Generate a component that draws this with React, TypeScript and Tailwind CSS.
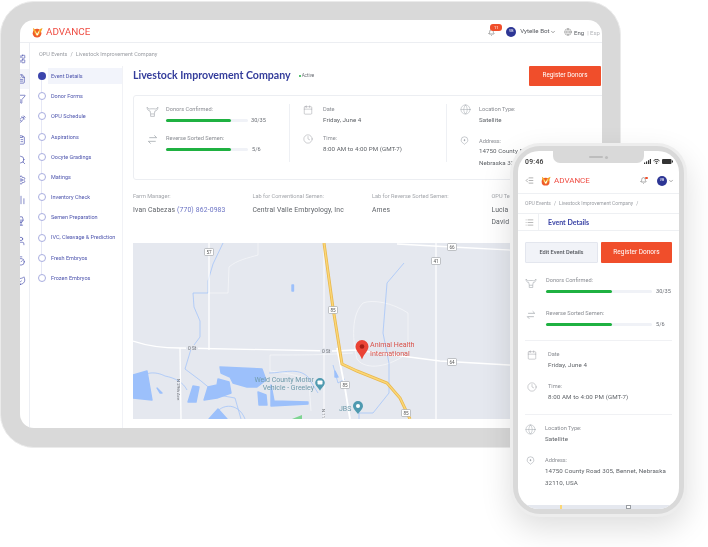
import React from "react";
import { Bell, Calendar, ChevronDown, Clock, Globe, LayoutGrid, FileText, Filter, Syringe, ClipboardList, Search, Settings, BarChart2, Wine, User, Timer, Leaf, List, IndentDecrease } from "lucide-react";

const sans = "font-['Roboto','Liberation_Sans',sans-serif]";
const head = "font-['Lato','Liberation_Sans',sans-serif]";

function Logo({ size }: { size: number }) {
  return (
    <svg width={size} height={size} viewBox="0 0 24 24" className="shrink-0">
      <circle cx="11" cy="13.5" r="9.5" fill="#ef5a2c" />
      <path d="M2 2 C6 4 9 8 11 13 C13 8 17 4 23 2 C21 9 16 17 11 20 C7 16 3 9 2 2Z" fill="#f6a623" />
      <path d="M6 7 L11 15 L17 6 L13 18 L10 18Z" fill="#fff" />
    </svg>
  );
}

function Brand({ size, text }: { size: number; text: string }) {
  return (
    <div className="flex items-center gap-[3px]">
      <Logo size={size} />
      <span className={`${sans} ${text} font-normal text-[#ef4d43] leading-none`}>ADVANCE</span>
    </div>
  );
}

function Cow({ size }: { size: number }) {
  return (
    <svg width={size} height={size} viewBox="0 0 24 24" fill="none" stroke="#a4a9ae" strokeWidth="1.2">
      <path d="M2 4 C4 7 6 8 9 7 H15 C18 8 20 7 22 4 C22 9 19 11 16.5 11 L15.5 16 V21 H8.5 V16 L7.5 11 C5 11 2 9 2 4Z" />
      <path d="M8.5 16.5 H15.5 M10.5 19h.01M13.5 19h.01" />
    </svg>
  );
}

function Swap({ size }: { size: number }) {
  return (
    <svg width={size} height={size} viewBox="0 0 24 24" fill="none" stroke="#9aa0a6" strokeWidth="1.6">
      <path d="M5 8h16M16 3l5 5M19 16H3M8 21l-5-5" />
    </svg>
  );
}

function GlobeBall({ size }: { size: number }) {
  return <Globe size={size} strokeWidth={1} color="#9aa0a6" />;
}

function PinRing({ size }: { size: number }) {
  return (
    <svg width={size} height={size} viewBox="0 0 24 24" fill="none" stroke="#9aa0a6" strokeWidth="1.4">
      <path d="M12 22 C9 19 3 17 3 11 a9 9 0 0 1 18 0 C21 17 15 19 12 22Z" />
      <circle cx="12" cy="11" r="1.6" fill="#9aa0a6" />
    </svg>
  );
}

function Progress({ value, track, fill, gap }: { value: string; track: string; fill: string; gap: string }) {
  return (
    <div className={`flex items-center h-[12px] ${gap}`}>
      <div className={`h-[3px] rounded-full bg-[#f0f2f7] ${track}`}>
        <div className={`h-[3px] rounded-full bg-[#1fb141] ${fill}`} />
      </div>
      <span className={`${sans} text-[5.6px] text-[#6b6f76]`}>{value}</span>
    </div>
  );
}

function Label({ children }: { children: React.ReactNode }) {
  return <div className={`${sans} h-[10px] leading-[10px] text-[5.65px] text-[#8a8d93] whitespace-nowrap`}>{children}</div>;
}

function Value({ children }: { children: React.ReactNode }) {
  return <div className={`${sans} leading-[11.5px] pt-[0.5px] text-[6.2px] tracking-[0.05px] text-[#5f6368] whitespace-nowrap`}>{children}</div>;
}

const steps = ["Event Details", "Donor Forms", "OPU Schedule", "Aspirations", "Oocyte Gradings", "Matings", "Inventory Check", "Semen Preparation", "IVC, Cleavage & Prediction", "Fresh Embryos", "Frozen Embryos"];

const railIcons = [LayoutGrid, FileText, Filter, Syringe, ClipboardList, Search, Settings, BarChart2, Wine, User, Timer, Leaf];

function Rail() {
  return (
    <div className="w-[10px] shrink-0 border-r-[1.5px] border-[#eceef3] overflow-hidden flex flex-col items-end pt-[6px]">
      {railIcons.map((I, i) => (
        <div key={i} className={`h-[20.2px] w-[10px] shrink-0 overflow-hidden flex items-center justify-end ${i === 1 ? "bg-[#f3f4fa]" : ""}`}>
          <I size={10} strokeWidth={1.5} color="#3f47a8" className="shrink-0 mr-[3px]" />
        </div>
      ))}
    </div>
  );
}

function StepNav() {
  return (
    <div className="w-[93px] shrink-0 border-r border-[#f1f2f6] pl-[6px]">
      {steps.map((s, i) => (
        <div key={s} className="relative h-[20.2px] flex items-center">
          {i < steps.length - 1 && <div className="absolute left-[5px] top-[14px] h-[13px] w-px bg-[#e6e8f6]" />}
          <div className={`w-[8px] h-[8px] rounded-full shrink-0 ${i === 0 ? "bg-[#3b44ac]" : "bg-white border-[0.7px] border-[#a9aee0]"} ml-[1.5px]`} />
          <div className={`${sans} ml-[2.5px] flex-1 h-[16px] flex items-center pl-[3px] text-[5.5px] whitespace-nowrap text-[#4d54ad] ${i === 0 ? "bg-[#f2f4fb]" : ""}`}>{s}</div>
        </div>
      ))}
    </div>
  );
}

function MapArt({ w, h }: { w: number; h: number }) {
  const shields: [number, number, string][] = [[76, 9, "57"], [200, 67, "85"], [212, 142, "85"], [273, 170, "85"], [319, 4, "66"], [303, 18, "41"], [319, 119, "64"]];
  return (
    <svg width={w} height={h} viewBox={`0 0 ${w} ${h}`} className="block bg-[#e5e8ef]">
      <g fill="none" stroke="#fff" strokeWidth="0.6" opacity="0.8">
        <path d="M125 0 V12 C115 15 104 17 96 24 L95 50 H75" />
        <path d="M220 110 C190 112 170 112 137 112 V128 C150 130 172 132 176 140 L178 168" />
        <path d="M230 60 C215 75 222 108 224 116 C230 125 250 128 275 110 V70 C260 60 240 56 230 60Z" />
      </g>
      <g fill="none" stroke="#9cc0fb" strokeWidth="0.7">
        <path d="M90 0 L80 21 L75 38 V50 H60 L61 64 L67 78 V94 L58 106 L52 126 L68 138 L85 152 L102 155 L108 176" />
        <path d="M0 141 C10 128 22 128 32 133 C42 135 50 139 54 147" />
        <path d="M80 176 C85 160 105 158 112 176" />
        <path d="M136 130 C150 130 165 124 175 134 L185 150 M200 122 L205 140 L212 136" />
        <path d="M271 20 L254 40 L250 90 L256 120 V150 L240 170 H226 V176" />
      </g>
      <g fill="#9cc0fb" stroke="#9cc0fb" strokeWidth="1.4" strokeLinejoin="round">
        <polygon points="0,132 14,128 19,157 0,155" />
        <polygon points="24,145 29,150 27,150" />
        <polygon points="55,159 60,143 66,144 63,159" />
        <polygon points="71,157 75,144 84,142 85,136 96,139 98,150 84,155" />
        <polygon points="87,124 129,126 133,137 124,144 114,144 100,140 97,134 88,130" />
        <polygon points="125,149 133,152 134,162 126,162" />
        <polygon points="138,142 141,158 175,159 175,161 138,163" />
        <polygon points="76,176 85,166 94,176" />
        <rect x="159" y="42" width="1.5" height="6" />
        <polygon points="202,128 205,134 202,134" />
      </g>
      <polygon points="159,176 169,172 169,176" fill="#7ed492" />
      <g fill="none" stroke="#fff">
        <path d="M0 98 C15 103 35 105 47 105 L200 108 L222 107 L307 118 L376 122 L469 126" strokeWidth="1.3" />
        <path d="M76 0 V107" strokeWidth="1.3" />
        <path d="M47 105 L48 176" strokeWidth="1.3" />
        <path d="M191 0 V176" strokeWidth="0.9" />
        <path d="M303 0 V176" strokeWidth="1.2" />
        <path d="M264 1 L319 4 L469 12" strokeWidth="1.3" />
        <path d="M204 105 L212 145 L217 176" strokeWidth="1.8" />
      </g>
      <path d="M191 0 L200 65 L209 121 L224 128 L254 140 L267 155 L277 176" fill="none" stroke="#e9b84e" strokeWidth="3" />
      <path d="M191 0 L200 65 L209 121 L224 128 L254 140 L267 155 L277 176" fill="none" stroke="#fbd777" strokeWidth="1.4" />
      {shields.map(([x, y, t]) => (
        <g key={x + t}>
          <rect x={x - 4.5} y={y - 3.5} width="9" height="7" rx="1" fill="#fff" stroke="#9a9ea3" strokeWidth="0.6" />
          <text x={x} y={y + 1.8} textAnchor="middle" fontSize="4.6" fill="#555" fontFamily="Roboto">{t}</text>
        </g>
      ))}
      <g fontFamily="Roboto" fontSize="4.6" fill="#6b6f76">
        <rect x="53" y="102" width="12" height="5" fill="#e5e8ef" />
        <text x="59" y="106.5" textAnchor="middle">O St</text>
        <rect x="187" y="105" width="12" height="5" fill="#e5e8ef" />
        <text x="193" y="109.5" textAnchor="middle">O St</text>
        <text transform="translate(44 136) rotate(90)" fontSize="4.4">N 29th Ave</text>
        <text transform="translate(189 166) rotate(90)" fontSize="4.4">N 11</text>
      </g>
      <g fontFamily="Roboto" fontSize="7" fill="#6f9bab">
        <text x="181" y="139" textAnchor="end">Weld County Motor</text>
        <text x="181" y="147" textAnchor="end">Vehicle - Greeley</text>
        <text x="206" y="168">JBS</text>
      </g>
      <path d="M187 135 a4.8 4.8 0 0 1 4.8 4.8 c0 3 -3 4.5 -4.8 8 c-1.8 -3.5 -4.8 -5 -4.8 -8 a4.8 4.8 0 0 1 4.8 -4.8Z" fill="#4f9ab0" />
      <rect x="184.5" y="137.5" width="5" height="4" rx="0.8" fill="#fff" />
      <path d="M225 158 a5 5 0 0 1 5 5 c0 3 -3 5 -5 8 c-2 -3 -5 -5 -5 -8 a5 5 0 0 1 5 -5Z" fill="#4f9ab0" />
      <circle cx="225" cy="163" r="2" fill="#fff" />
      <path d="M229 97 a6.5 6.5 0 0 1 6.5 6.5 c0 4.5 -4.5 7 -6.5 13 c-2 -6 -6.5 -8.5 -6.5 -13 a6.5 6.5 0 0 1 6.5 -6.5Z" fill="#ea4335" />
      <circle cx="229" cy="103.5" r="2.3" fill="#a51d14" />
      <g fontFamily="Roboto" fontSize="7.1" fill="#d9534b">
        <text x="237" y="104">Animal Health</text>
        <text x="237" y="113">International</text>
      </g>
    </svg>
  );
}

function DesktopCard() {
  return (
    <div className="mt-[9px] w-[500px] h-[85px] border border-[#eceef2] rounded-[3px] pt-[8px] flex">
      <div className="w-[156px] h-[58px] border-r border-[#eef0f4] shrink-0 flex flex-col">
        <div className="h-[32px] flex pl-[12px] gap-[6px]">
          <div className="w-[14px] pt-[1px]"><Cow size={13} /></div>
          <div>
            <Label>Donors Confirmed:</Label>
            <Progress value="30/35" track="w-[82px]" fill="w-[65px]" gap="gap-[3px]" />
          </div>
        </div>
        <div className="h-[32px] flex pl-[12px] gap-[6px]">
          <div className="w-[14px] pt-[1px] pl-[1px]"><Swap size={11} /></div>
          <div>
            <Label>Reverse Sorted Semen:</Label>
            <Progress value="5/6" track="w-[82px]" fill="w-[65px]" gap="gap-[4px]" />
          </div>
        </div>
      </div>
      <div className="w-[157px] h-[58px] border-r border-[#eef0f4] shrink-0 pl-[13px] flex flex-col">
        <div className="h-[31.5px] flex gap-[10px]">
          <Calendar size={10} strokeWidth={1} color="#8a8d93" className="mt-[1px]" />
          <div><Label>Date</Label><Value>Friday, June 4</Value></div>
        </div>
        <div className="h-[31.5px] flex gap-[10px]">
          <Clock size={10} strokeWidth={1} color="#8a8d93" className="mt-[1px]" />
          <div><Label>Time:</Label><Value>8:00 AM to 4:00 PM (GMT-7)</Value></div>
        </div>
      </div>
      <div className="pl-[13px] flex flex-col">
        <div className="h-[31.5px] flex gap-[8px]">
          <GlobeBall size={11} />
          <div><Label>Location Type:</Label><Value>Satellite</Value></div>
        </div>
        <div className="flex gap-[10px]">
          <PinRing size={9} />
          <div>
            <Label>Address:</Label>
            <Value>14750 County Road 305,</Value>
            <Value>Nebraska 32110, USA</Value>
          </div>
        </div>
      </div>
    </div>
  );
}

function InfoCols() {
  const cols: [string, React.ReactNode][] = [
    ["Farm Manager:", <>Ivan Cabezas <span className="text-[#6b73c4]">(770) 862-0983</span></>],
    ["Lab for Conventional Semen:", "Central Valle Embryology, Inc"],
    ["Lab for Reverse Sorted Semen:", "Ames"],
    ["OPU Team:", <>Lucia Mendez<br />David Ortiz</>],
  ];
  return (
    <div className="mt-[11px] flex h-[52px] shrink-0">
      {cols.map(([l, v], i) => (
        <div key={i} className="w-[119.5px] shrink-0">
          <div className={`${sans} h-[10px] leading-[10px] text-[5.6px] text-[#a3a6ab] whitespace-nowrap`}>{l}</div>
          <div className={`${sans} mt-[4px] leading-[11.5px] text-[6.8px] tracking-[0.15px] text-[#5f6368] whitespace-nowrap`}>{v}</div>
        </div>
      ))}
    </div>
  );
}

function Tablet() {
  return (
    <div className="w-[621px] h-[447px] mt-[1px] rounded-[34px] bg-[#d9d9d9] border border-[#ebebeb] pl-[19px] pt-[18px]">
      <div className="w-[582px] h-[408px] bg-white rounded-[14px] overflow-hidden flex flex-col">
        <div className="h-[23px] shrink-0 border-b-[1px] border-[#eceef2] flex items-center justify-between pl-[12px] pr-[2px] pt-[2px]">
          <Brand size={11} text="text-[9.9px]" />
          <div className="flex items-center">
            <div className="relative mr-[11px]">
              <Bell size={7} strokeWidth={1.4} color="#333" />
              <span className={`${sans} absolute -top-[5px] -right-[7px] w-[12px] h-[7px] rounded-[3px] bg-[#f04e2b] text-white text-[4px] leading-[7px] text-center`}>11</span>
            </div>
            <div className="w-[10px] h-[10px] rounded-full bg-[#2d3695] flex items-center justify-center text-white text-[3.5px] mr-[4px]"><span className={sans}>VB</span></div>
            <span className={`${sans} text-[6.2px] text-[#55585e]`}>Vytelle Bot</span>
            <ChevronDown size={6} strokeWidth={2} color="#444" className="mr-[8px]" />
            <Globe size={8} strokeWidth={1.2} color="#666" className="mr-[2.5px]" />
            <span className={`${sans} text-[6px] text-[#55585e]`}>Eng</span>
            <span className={`${sans} text-[6px] text-[#b4b6ba] ml-[3px]`}>| Esp</span>
          </div>
        </div>
        <div className="flex-1 flex min-h-0">
          <Rail />
          <div className="flex-1 flex flex-col min-w-0">
            <div className={`${sans} h-[23px] shrink-0 pl-[9px] flex items-center text-[5.5px] text-[#9a9da3]`}>OPU Events<span className="mx-[3px]">/</span>Livestock Improvement Company</div>
            <div className="flex-1 flex min-h-0">
              <StepNav />
              <div className="flex-1 pl-[10px] min-w-0 flex flex-col">
                <div className="h-[20px] shrink-0 flex items-center justify-between pr-[1px]">
                  <div className="flex items-center">
                    <span className={`${head} text-[10.6px] font-bold text-[#333c9b]`}>Livestock Improvement Company</span>
                    <span className="ml-[8px] w-[2px] h-[2px] rounded-full bg-[#1fb141]" />
                    <span className={`${sans} ml-[1px] text-[4.6px] text-[#6b6f76]`}>Active</span>
                  </div>
                  <div className={`${sans} w-[72px] h-[20px] rounded-[1px] bg-[#f04e2b] text-white text-[6.3px] flex items-center justify-center`}>Register Donors</div>
                </div>
                <DesktopCard />
                <InfoCols />
                <MapArt w={469} h={176} />
              </div>
            </div>
          </div>
        </div>
      </div>
    </div>
  );
}

function PhoneDetail({ icon, iconBox, label, lines }: { icon: React.ReactNode; iconBox: string; label: string; lines: string[] }) {
  return (
    <div className="h-[32px] flex">
      <div className={`${iconBox} shrink-0 pt-[1px]`}>{icon}</div>
      <div>
        <Label>{label}</Label>
        {lines.map((l) => (
          <div key={l} className={`${sans} leading-[12px] text-[6.2px] tracking-[0.1px] text-[#5f6368] whitespace-nowrap`}>{l}</div>
        ))}
      </div>
    </div>
  );
}

function Phone() {
  return (
    <div className="absolute left-[510px] top-[143px] w-[177px] h-[374px] rounded-[30px] bg-[#ededed] p-[3px] shadow-[0_12px_30px_rgba(0,0,0,0.13)]">
      <div className="w-full h-full rounded-[27px] bg-[#d9d9d9] p-[5px]">
        <div className="relative w-full h-full rounded-[21px] bg-white overflow-hidden flex flex-col">
          <div className="absolute top-0 left-[35px] w-[91px] h-[12px] bg-[#d9d9d9] rounded-b-[7px] flex items-center justify-center gap-[2px]">
            <span className="w-[14px] h-[2px] rounded-full bg-[#bdbdbd]" />
            <span className="w-[3px] h-[3px] rounded-full bg-[#bdbdbd]" />
          </div>
          <div className="h-[17px] shrink-0 flex items-end justify-between pl-[7px] pr-[6px] pb-[1px]">
            <span className={`${sans} text-[6.8px] tracking-[0.3px] font-medium text-[#333] leading-[9px]`}>09:46</span>
            <div className="flex items-center gap-[2px] mb-[3px]">
              <svg width="7" height="5" viewBox="0 0 7 5" fill="#333"><rect x="0" y="3.5" width="1.2" height="1.5" /><rect x="2" y="2.4" width="1.2" height="2.6" /><rect x="4" y="1.2" width="1.2" height="3.8" /><rect x="5.8" y="0" width="1.2" height="5" /></svg>
              <svg width="7" height="5" viewBox="0 0 14 10" fill="none" stroke="#333" strokeWidth="2"><path d="M1 3.5 C5 0 9 0 13 3.5 M3.5 6 C5.5 4.3 8.5 4.3 10.5 6" /><circle cx="7" cy="8.5" r="0.8" fill="#333" /></svg>
              <svg width="11" height="5" viewBox="0 0 11 5"><rect x="0" y="0" width="9.5" height="5" rx="1" fill="#333" /><rect x="10" y="1.5" width="1" height="2" fill="#333" /></svg>
            </div>
          </div>
          <div className="h-[26px] shrink-0 border-b border-[#eef0f3] flex items-center pl-[7px] pr-[5px]">
            <IndentDecrease size={9} strokeWidth={1.1} color="#444" className="mr-[7px]" />
            <Brand size={10} text="text-[8px]" />
            <div className="ml-auto relative mr-[10px]">
              <Bell size={7} strokeWidth={1.3} color="#333" />
              <span className="absolute -top-[0.5px] -right-[0.5px] w-[2.5px] h-[2.5px] rounded-full bg-[#f04e2b]" />
            </div>
            <div className={`${sans} w-[10px] h-[10px] rounded-full bg-[#2d3695] flex items-center justify-center text-white text-[3.5px] mr-[1px]`}>VB</div>
            <ChevronDown size={6} strokeWidth={2} color="#555" />
          </div>
          <div className={`${sans} h-[20px] shrink-0 border-b border-[#eef0f3] flex items-center pl-[7px] text-[5px] text-[#9a9da3] whitespace-nowrap`}>OPU Events<span className="mx-[3px]">/</span>Livestock Improvement Company<span className="mx-[3px]">/</span></div>
          <div className="h-[17px] shrink-0 border-b border-[#eef0f3] flex items-stretch">
            <div className="w-[21px] border-r border-[#eef0f3] pl-[7px] flex items-center"><List size={9} strokeWidth={1.1} color="#555" /></div>
            <div className={`${head} pl-[9px] flex items-center text-[7px] font-bold text-[#3b44a6]`}>Event Details</div>
          </div>
          <div className="pl-[7px] pr-[7px] flex flex-col flex-1 min-h-0">
            <div className="mt-[11px] h-[21px] flex gap-[3px] shrink-0">
              <div className={`${sans} flex-1 rounded-[1px] bg-[#f1f3f8] border border-[#e3e6ee] text-[5.7px] font-medium text-[#55585e] flex items-center justify-center`}>Edit Event Details</div>
              <div className={`${sans} flex-1 rounded-[1px] bg-[#f04e2b] text-white text-[6.5px] flex items-center justify-center`}>Register Donors</div>
            </div>
            <div className="mt-[12px] h-[33px] flex shrink-0">
              <div className="w-[21px] pt-[2px]"><Cow size={12} /></div>
              <div>
                <Label>Donors Confirmed:</Label>
                <Progress value="30/35" track="w-[106px]" fill="w-[66px]" gap="gap-[4px]" />
              </div>
            </div>
            <div className="h-[32px] flex shrink-0 border-b-0">
              <div className="w-[21px] pt-[2px] pl-[1px]"><Swap size={10} /></div>
              <div>
                <Label>Reverse Sorted Semen:</Label>
                <Progress value="5/6" track="w-[106px]" fill="w-[66px]" gap="gap-[4px]" />
              </div>
            </div>
            <div className="border-t border-[#f0f1f4] pt-[8px] shrink-0">
              <PhoneDetail iconBox="w-[23px] pl-[2px]" icon={<Calendar size={10} strokeWidth={1} color="#8a8d93" />} label="Date" lines={["Friday, June 4"]} />
              <PhoneDetail iconBox="w-[23px] pl-[2px]" icon={<Clock size={10} strokeWidth={1} color="#8a8d93" />} label="Time:" lines={["8:00 AM to 4:00 PM (GMT-7)"]} />
            </div>
            <div className="mt-[1px] border-t border-[#f0f1f4] pt-[8px] shrink-0">
              <PhoneDetail iconBox="w-[20px]" icon={<GlobeBall size={11} />} label="Location Type:" lines={["Satellite"]} />
              <PhoneDetail iconBox="w-[20px] pl-[1px]" icon={<PinRing size={9} />} label="Address:" lines={["14750 County Road 305, Bennet, Nebraska", "32110, USA"]} />
            </div>
            <div className="mt-auto h-[4px] shrink-0 bg-[#e5e8ef] flex pl-[35px] gap-[64px]">
              <span className="w-[2px] h-[4px] bg-[#fbd777]" />
              <span className="w-[5px] h-[4px] bg-white border border-[#9a9ea3]" />
            </div>
          </div>
        </div>
      </div>
    </div>
  );
}

export default function App() {
  return (
    <div className="relative w-[708px] h-[547px] overflow-hidden bg-white blur-[0.4px]">
      <Tablet />
      <Phone />
    </div>
  );
}
